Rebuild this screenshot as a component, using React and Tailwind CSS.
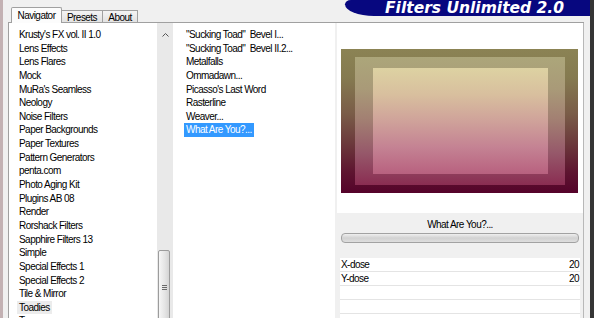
import React from "react";

const LEFT = [
  "Krusty's FX vol. II 1.0",
  "Lens Effects",
  "Lens Flares",
  "Mock",
  "MuRa's Seamless",
  "Neology",
  "Noise Filters",
  "Paper Backgrounds",
  "Paper Textures",
  "Pattern Generators",
  "penta.com",
  "Photo Aging Kit",
  "Plugins AB 08",
  "Render",
  "Rorshack Filters",
  "Sapphire Filters 13",
  "Simple",
  "Special Effects 1",
  "Special Effects 2",
  "Tile & Mirror",
  "Toadies",
  "Tramages",
];

const MID = [
  '"Sucking Toad"  Bevel I...',
  '"Sucking Toad"  Bevel II.2...',
  "Metalfalls",
  "Ommadawn...",
  "Picasso's Last Word",
  "Rasterline",
  "Weaver...",
];

export default function App() {
  return (
    <div className="flex w-[594px] h-[318px] overflow-hidden bg-[#f0f0f0] text-black text-[10px] tracking-[-0.55px] font-[family-name:'Liberation_Sans',Arial,sans-serif]">
      <div className="w-[3px] shrink-0 bg-[#c3b1b3]" />
      <div className="flex-1 flex flex-col min-w-0">
        {/* header */}
        <div className="h-[22px] shrink-0 flex justify-between">
          <div className="flex items-end pl-[8px]">
            <div className="relative z-10 -mb-[1px] h-[16px] w-[51px] flex items-center justify-center bg-[#fcfcfc] border border-b-0 border-[#a0a0a0] rounded-t-[2px] leading-none pt-[1px]">
              Navigator
            </div>
            <div className="h-[12px] w-[41px] flex items-center justify-center border border-l-0 border-b-0 border-[#a0a0a0] bg-[linear-gradient(to_bottom,#f4f4f4,#e2e2e2)] leading-none pt-[2px]">
              Presets
            </div>
            <div className="h-[12px] w-[35px] flex items-center justify-center border border-l-0 border-b-0 border-[#a0a0a0] bg-[linear-gradient(to_bottom,#f4f4f4,#e2e2e2)] leading-none pt-[2px]">
              About
            </div>
          </div>
          <div className="w-[245px] h-[16px] bg-[#07077f] rounded-bl-[40px_16px] rounded-tl-[8px_6px] flex items-end justify-end pr-[26px] pb-[1px]">
            <span className="font-[family-name:'DejaVu_Sans',sans-serif] font-bold italic text-[15.5px] leading-[14px] tracking-normal text-white">
              Filters Unlimited 2.0
            </span>
          </div>
        </div>

        {/* body */}
        <div className="flex-1 min-h-0 flex ml-[5px] mr-[6px] border-t border-l border-[#a0a0a0]">
          {/* left list */}
          <div className="w-[148px] shrink-0 bg-white pt-[5px] pl-[10px] leading-[13.65px] overflow-hidden">
            {LEFT.map((t) => (
              <div key={t} className="h-[13.65px] whitespace-nowrap">
                {t === "Toadies" ? (
                  <span className="inline-block -ml-[2px] px-[2px] bg-[#ececec]">{t}</span>
                ) : (
                  t
                )}
              </div>
            ))}
          </div>
          {/* scrollbar */}
          <div className="w-[16px] shrink-0 bg-[#e9e9e9] flex flex-col overflow-hidden">
            <div className="h-[17px] shrink-0 flex items-end justify-center pb-[3px]">
              <svg width="7" height="4" viewBox="0 0 7 4">
                <path d="M0.5 3.5 L3.5 0.5 L6.5 3.5" fill="none" stroke="#555" strokeWidth="1" />
              </svg>
            </div>
            <div className="mt-[210px] ml-[1px] w-[12px] h-[90px] shrink-0 rounded-[2px] border border-[#9c9c9c] bg-[linear-gradient(to_right,#f6f6f6,#e4e4e4_60%,#d4d4d4)] flex flex-col items-center pt-[34px] gap-[1px]">
              <div className="w-[5px] h-[1px] bg-[#6a6a6a]" />
              <div className="w-[5px] h-[1px] bg-[#6a6a6a]" />
              <div className="w-[5px] h-[1px] bg-[#6a6a6a]" />
            </div>
          </div>
          {/* middle list */}
          <div className="w-[162px] shrink-0 bg-white pt-[5px] pl-[11px] leading-[13.65px] overflow-hidden">
            {MID.map((t) => (
              <div key={t} className="h-[13.65px] pl-[2px] whitespace-pre">
                {t}
              </div>
            ))}
            <div className="h-[13.65px]">
              <span className="inline-block h-[14px] px-[2px] bg-[#3399ff] text-white">What Are You?...</span>
            </div>
          </div>
          {/* right panel */}
          <div className="w-[247px] shrink-0 ml-[2px] flex flex-col border-r border-[#b8b8b8]">
            <div className="h-[190px] shrink-0 bg-white pt-[26px] pl-[4px]">
              <div className="w-[237px] h-[144px] pt-[8px] pl-[14px] pr-[13px] pb-[8px] bg-[linear-gradient(to_bottom,#8b8354_0%,#857a50_20%,#7a5c48_45%,#6c3a3c_65%,#5e1530_85%,#55032a_100%)]">
                <div className="w-full h-full pt-[11px] pl-[18px] pr-[17px] pb-[11px] bg-[linear-gradient(to_bottom,#aca67a_0%,#a99a78_25%,#a27e72_50%,#96586a_75%,#8a2d52_100%)]">
                  <div className="w-full h-full bg-[linear-gradient(to_bottom,#ddd2a2_0%,#d8bf9e_25%,#cfa29a_50%,#c48293_75%,#b8617f_100%)]" />
                </div>
              </div>
            </div>
            <div className="h-[20px] shrink-0 flex items-center justify-center pt-[3px]">What Are You?...</div>
            <div className="h-[10px] shrink-0 mx-[4px] rounded-[4px] border border-[#a2a2a2] bg-[linear-gradient(to_bottom,#efefef,#d2d2d2_50%,#dedede)]" />
            <div className="h-[15px] shrink-0" />
            <div className="mx-[3px] flex flex-col">
              {[
                ["X-dose", "20"],
                ["Y-dose", "20"],
                ["", ""],
                ["", ""],
                ["", ""],
              ].map(([a, b], i) => (
                <div key={i} className="h-[14px] shrink-0 bg-white border-b border-[#e4e4e4] flex items-center justify-between px-[1px] leading-none pt-[1px]">
                  <span>{a}</span>
                  <span>{b}</span>
                </div>
              ))}
            </div>
          </div>
        </div>
      </div>
      <div className="w-[4px] shrink-0 bg-[#353535]" />
    </div>
  );
}
